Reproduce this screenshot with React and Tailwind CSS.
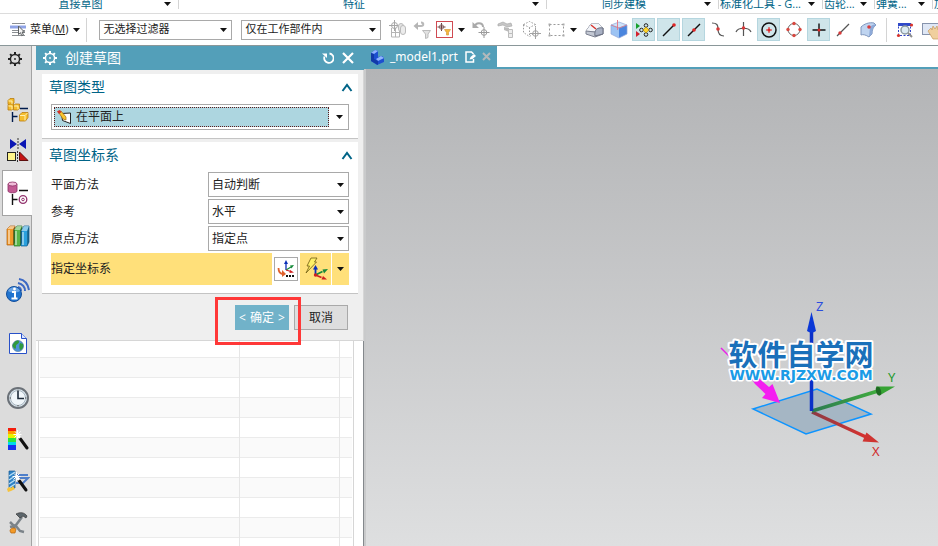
import React from 'react';
import clsx from 'clsx';

const Caret = ({ className }) => (
    <svg width="7" height="4" viewBox="0 0 7 4" className={clsx('shrink-0 pointer-events-none', className)} aria-hidden="true">
        <path d="M0 0h7L3.5 4z" fill="#111" />
    </svg>
);

const Icon = ({ w = 22, h = 22, className, children }) => (
    <svg width={w} height={h} viewBox={`0 0 ${w} ${h}`} className={clsx('shrink-0', className)} fill="none" aria-hidden="true">
        {children}
    </svg>
);

const GearIcon = ({ color, className }) => (
    <Icon w={14} h={14} className={className}>
        <circle cx="7" cy="7" r="4.6" stroke={color} strokeWidth="1.500" />
        <circle cx="7" cy="7" r=".9" fill={color} />
        <path d="M7 0v2.400M7 11.600V14M0 7h2.400M11.600 7H14M2.100 2.100l1.500 1.500M10.400 10.400l1.500 1.500M2.100 11.900l1.500-1.500M10.400 3.600l1.500-1.500" stroke={color} strokeWidth="2" />
    </Icon>
);

/* ---------- ribbon ---------- */

const ribbonGroups = [
    { label: '直接草图', className: 'w-[179px] shrink-0', center: true },
    { label: '特征', className: 'flex-1', center: true },
    { label: '同步建模', className: 'w-[172px] shrink-0', center: true },
    { label: '标准化工具 - G...', className: 'w-[104px] shrink-0' },
    { label: '齿轮...', className: 'w-[52px] shrink-0' },
    { label: '弹簧...', className: 'w-[58px] shrink-0' },
];

const Ribbon = () => (
    <div className="flex h-[14px] items-end overflow-hidden border-b border-[#dcdcdc] bg-white text-[11px] leading-[18px] text-[#006487]">
        {ribbonGroups.map((g) => (
            <div key={g.label} className={clsx('flex min-w-0 items-center', g.className)}>
                <span className={clsx('min-w-0 flex-1 whitespace-nowrap', g.center ? 'pl-1 text-center' : 'pl-px')}>{g.label}</span>
                <span className="flex w-[21px] shrink-0 justify-center">
                    <Caret />
                </span>
                <span className="h-[10px] w-px shrink-0 bg-[#d4d4d4]" />
            </div>
        ))}
        <span className="w-[5px] shrink-0 overflow-hidden whitespace-nowrap pl-px">加</span>
    </div>
);

/* ---------- toolbar ---------- */

const MenuIcon = () => (
    <Icon w={17} h={15}>
        <path d="M2 1.500h13M2 8.500h13M2 10.500h13M2 13.500h13" stroke="#8b8f93" strokeWidth="1" />
        <path d="M0 3.500h16v3H0z" fill="#8fa3e6" />
        <path d="M8.500 4v8.500l2-1.800 1.200 3 1.700-.8-1.300-2.900h2.400z" fill="#f4f4f4" stroke="#5d6062" />
    </Icon>
);

const PinnedViewsIcon = () => (
    <Icon>
        <path d="M4.500 9v9h8v-9M4.500 13.500h8M8.500 9v9" stroke="#b4b4b4" />
        <circle cx="7.500" cy="6.500" r="3" stroke="#a6a6a6" />
        <path d="M7.500 1v11M2 6.500h11" stroke="#a6a6a6" />
        <rect x="11.500" y="4.500" width="5" height="8" rx="2.500" stroke="#bbb" fill="#e4e4e4" />
        <rect x="13.500" y="6.500" width="5" height="9" rx="2.500" stroke="#bbb" fill="#ececec" />
    </Icon>
);

const ResetFilterIcon = () => (
    <Icon>
        <path d="M4 7h5c3 0 3-3.500 0-3.500" stroke="#b9b9b9" strokeWidth="2" />
        <path d="M6 3v8L1.500 7z" fill="#b5b5b5" />
        <path d="M10.500 11.500h8l-2.500 3.500v3.500l-2.500 1v-4.500z" fill="#e2e2e2" stroke="#bbb" />
    </Icon>
);

const SelectFilterIcon = () => (
    <Icon w={17} h={17}>
        <rect x="0.500" y="0.500" width="16" height="16" fill="#fff" stroke="#d04a52" />
        <path d="M5.500 2v8M1.500 6h8" stroke="#6a4040" />
        <circle cx="5.500" cy="6" r="2.200" stroke="#8a6a6a" />
        <path d="M8.500 8.500h6l-2 3v2.500h-2v-2.500z" fill="#f5b83c" stroke="#d69a3c" strokeWidth=".7" />
    </Icon>
);

const SnapUndoIcon = () => (
    <Icon>
        <path d="M4 8c0-5 8-5 8 0" stroke="#aaa" strokeWidth="2" />
        <path d="M1.500 3v6H8z" fill="#aaa" />
        <circle cx="13" cy="13.500" r="2.800" stroke="#9b9b9b" />
        <path d="M13 8v11M7.500 13.500h11" stroke="#9b9b9b" />
    </Icon>
);

const PartsIcon = () => (
    <Icon>
        <path d="M2 5l5-2 4 2 4-1 1 3-5 1-4-2-5 1z" fill="#c6c6c6" stroke="#aaa" strokeWidth=".7" />
        <path d="M8 8l5 1v4l-5-2z" fill="#bbb" />
        <path d="M12.500 10.500h4v4h-4zM12.500 14.500h4v4h-4z" fill="#ededed" stroke="#bcbcbc" />
    </Icon>
);

const DashedCubeIcon = () => (
    <Icon>
        <path d="M2.500 5.500l6-3 6 3v8l-6 4-6-4zM2.500 5.500l6 3 6-3M8.500 8.500v8" stroke="#9a9a9a" strokeDasharray="1.500 1.500" />
        <circle cx="14.500" cy="14.500" r="2.800" stroke="#a2a2a2" fill="#fff" />
        <path d="M14.500 9v11M9 14.500h11" stroke="#a2a2a2" />
    </Icon>
);

const MarqueeIcon = () => (
    <Icon>
        <rect x="3.500" y="5.500" width="14" height="11" stroke="#999" strokeDasharray="2 2" />
        <path d="M2.500 4.500h2v2h-2zM16.500 4.500h2v2h-2zM2.500 15.500h2v2h-2zM16.500 15.500h2v2h-2z" fill="#aaa" />
    </Icon>
);

const SolidFaceIcon = () => (
    <Icon>
        <path d="M3 12l5-7h8l4 4v6l-8 3-9-3z" fill="#c3c8d3" stroke="#7b8090" />
        <path d="M8 5h8l4 4c-4-1-6 0-7 3l-10 0z" fill="#f3f5f9" />
        <path d="M12 17c-1-6 2-9 8-8v6z" fill="#a9b1c4" stroke="#6a7082" />
        <path d="M3 12l9 1" stroke="#7b8090" />
        <path d="M8 6l5 4" stroke="#d7322b" strokeWidth="1.500" />
    </Icon>
);

const CubeIcon = () => (
    <Icon>
        <path d="M3 6l8-3 8 3-8 3z" fill="#cfe3fa" />
        <path d="M3 6l8 3v10l-8-4z" fill="#9cc3f3" />
        <path d="M19 6l-8 3v10l8-4z" fill="#4b86de" />
        <path d="M3 6l8-3 8 3v9l-8 4-8-4zM3 6l8 3 8-3" stroke="#8fa6da" strokeWidth=".7" />
        <path d="M9.500 1v10" stroke="#e37e8c" />
        <path d="M3 6l8 3 8-3" stroke="#e0707c" strokeWidth=".7" />
    </Icon>
);

const SnapAllIcon = () => (
    <Icon>
        <path d="M3 4v6l4-3z" fill="#17a12c" />
        <path d="M3 12v6l4-3z" fill="#d3202c" />
        <path d="M7 11h12M13 5v12" stroke="#333" />
        <circle cx="13" cy="6.500" r="1.800" fill="#cfe5ea" stroke="#222" />
        <circle cx="13" cy="15.500" r="1.800" fill="#cfe5ea" stroke="#222" />
        <circle cx="8.500" cy="11" r="1.800" fill="#cfe5ea" stroke="#222" />
        <circle cx="17.500" cy="11" r="1.800" fill="#cfe5ea" stroke="#222" />
        <path d="M13 8l3 3-3 3-3-3z" fill="#ffd42a" stroke="#b58a00" strokeWidth=".6" />
    </Icon>
);

const EndPointIcon = () => (
    <Icon>
        <path d="M5 17L16 6" stroke="#111" strokeWidth="1.400" />
        <circle cx="16" cy="6" r="1.800" fill="#e02525" />
    </Icon>
);

const MidPointIcon = () => (
    <Icon>
        <path d="M5 17L17 5" stroke="#111" strokeWidth="1.400" />
        <circle cx="11" cy="11" r="1.800" fill="#e02525" />
    </Icon>
);

const ControlPointIcon = () => (
    <Icon>
        <path d="M4 4c5 0 6 2 6 6s1 7 6 7" stroke="#555" strokeWidth="1.200" />
        <circle cx="10" cy="10" r="1.800" fill="#d83a3a" />
    </Icon>
);

const IntersectionIcon = () => (
    <Icon>
        <path d="M3 13c2-5 13-5 15 0M10.500 3v14" stroke="#555" strokeWidth="1.200" />
        <circle cx="10.500" cy="9" r="1.800" fill="#d83a3a" />
    </Icon>
);

const ArcCenterIcon = () => (
    <Icon>
        <circle cx="11" cy="11" r="7" stroke="#111" strokeWidth="1.500" />
        <path d="M11 8v6M8 11h6" stroke="#e02525" />
        <circle cx="11" cy="11" r="1.500" fill="#e02525" />
    </Icon>
);

const QuadrantIcon = () => (
    <Icon>
        <circle cx="11" cy="10.500" r="6" stroke="#666" />
        <circle cx="11" cy="4.500" r="1.700" fill="#d8473f" />
        <circle cx="11" cy="16.500" r="1.700" fill="#d8473f" />
        <circle cx="5" cy="10.500" r="1.700" fill="#d8473f" />
        <circle cx="17" cy="10.500" r="1.700" fill="#d8473f" />
    </Icon>
);

const ExistingPointIcon = () => (
    <Icon>
        <path d="M11 4.500v13M4.500 11h13" stroke="#111" strokeWidth="1.400" />
        <circle cx="11" cy="11" r="1.500" fill="#e02525" />
    </Icon>
);

const PointOnCurveIcon = () => (
    <Icon>
        <path d="M4 17L16 5" stroke="#555" strokeWidth="1.200" />
        <circle cx="7" cy="14" r="1.700" fill="#d83a3a" />
    </Icon>
);

const PointOnFaceIcon = () => (
    <Icon>
        <path d="M3 8c3-3 8-5 13-4l2 2c-3 2-4 5-4 9l-3 3c-3-2-6-3-8-2z" fill="#bfd4f0" stroke="#7f96bd" />
        <path d="M12 8c2-2 4-3 6-2-3 2-4 5-4 9l-3 3z" fill="#8eaad8" />
        <circle cx="11" cy="8" r="1.800" fill="#d83a3a" />
    </Icon>
);

const ZoomWindowIcon = () => (
    <Icon>
        <rect x="4.500" y="5.500" width="12" height="11" stroke="#3146c8" strokeDasharray="2 1.500" />
        <path d="M4 4h13v3H4z" fill="#2f49c9" />
        <circle cx="11" cy="11" r="4" fill="#dcebf3" stroke="#8d9aa1" strokeWidth="1.500" />
        <path d="M14 14l4 4" stroke="#8d8d8d" strokeWidth="2" />
        <circle cx="17.500" cy="6" r="1.600" fill="#d8332c" />
        <circle cx="4.500" cy="16.500" r="1.600" fill="#d8332c" />
    </Icon>
);

const PanIcon = () => (
    <Icon>
        <rect x="3.500" y="4.500" width="18" height="11" fill="#dfe7f5" stroke="#8794ad" />
        <path d="M9 12l3-3 1 2 1-4 2 3 2-3 1 4 3-1v7l-3 3h-5z" fill="#f0cf9e" stroke="#c79a5d" strokeWidth=".7" />
    </Icon>
);

const filterTools = [
    { name: '类型过滤器', Glyph: PinnedViewsIcon },
    { name: '重置过滤器', Glyph: ResetFilterIcon },
];

const selectionTools = [
    { name: '撤销捕捉', Glyph: SnapUndoIcon },
    { name: '选择部件', Glyph: PartsIcon },
    { name: '隐藏体', Glyph: DashedCubeIcon },
    { name: '矩形选择', Glyph: MarqueeIcon },
];

const snapTools = [
    { name: '高亮面', Glyph: SolidFaceIcon },
    { name: '高亮体', Glyph: CubeIcon },
    { name: '启用捕捉点', Glyph: SnapAllIcon, active: true },
    { name: '端点', Glyph: EndPointIcon, active: true },
    { name: '中点', Glyph: MidPointIcon, active: true },
    { name: '控制点', Glyph: ControlPointIcon },
    { name: '交点', Glyph: IntersectionIcon },
    { name: '圆弧中心', Glyph: ArcCenterIcon, active: true },
    { name: '象限点', Glyph: QuadrantIcon },
    { name: '现有点', Glyph: ExistingPointIcon, active: true },
    { name: '曲线上的点', Glyph: PointOnCurveIcon },
    { name: '面上的点', Glyph: PointOnFaceIcon },
];

const ToolButton = ({ name, Glyph, active }) => (
    <button
        type="button"
        aria-label={name}
        aria-pressed={!!active}
        className={clsx('flex h-[23px] w-[23px] shrink-0 items-center justify-center border', active ? 'border-[#b5d6df] bg-[#cfe5ea]' : 'border-transparent')}
    >
        <Glyph />
    </button>
);

const Select = ({ id, label, value, className }) => (
    <div className={clsx('relative', className)}>
        <select id={id} aria-label={label} defaultValue={value} className="block h-full w-full appearance-none border border-[#a9a9a9] bg-white pl-[3px] pr-4 text-[#222] outline-none">
            <option>{value}</option>
        </select>
        <Caret className="absolute right-[5px] top-1/2 -mt-0.5" />
    </div>
);

const Toolbar = () => (
    <div className="flex h-8 items-center gap-0.5 overflow-hidden border-b border-[#8a9799] bg-white pl-[10px] text-[11px]">
        <button type="button" className="flex shrink-0 items-center text-[#222]">
            <MenuIcon />
            <span className="ml-[3px] mr-[5px] whitespace-nowrap">
                菜单(<u>M</u>)
            </span>
            <Caret />
        </button>
        <span className="ml-1 h-6 w-px shrink-0 bg-[#d4d4d4]" />
        <Select label="类型过滤器" value="无选择过滤器" className="ml-[10px] h-5 w-[133px] shrink-0" />
        <Select label="选择范围" value="仅在工作部件内" className="ml-[7px] mr-[3px] h-5 w-[140px] shrink-0" />
        {filterTools.map((t) => (
            <ToolButton key={t.name} {...t} />
        ))}
        <button type="button" aria-label="选择过滤" className="shrink-0">
            <SelectFilterIcon />
        </button>
        <button type="button" aria-label="更多过滤" className="flex w-[13px] shrink-0 justify-center">
            <Caret />
        </button>
        {selectionTools.map((t) => (
            <ToolButton key={t.name} {...t} />
        ))}
        <button type="button" aria-label="更多选择" className="flex w-[10px] shrink-0">
            <Caret />
        </button>
        {snapTools.map((t) => (
            <ToolButton key={t.name} {...t} />
        ))}
        <span className="mx-1 h-6 w-px shrink-0 bg-[#d4d4d4]" />
        <ToolButton name="缩放" Glyph={ZoomWindowIcon} />
        <ToolButton name="平移" Glyph={PanIcon} />
    </div>
);

/* ---------- resource bar ---------- */

const AssemblyIcon = () => (
    <Icon w={24} h={26}>
        <g stroke="#b97c10" strokeWidth=".8" fill="#f5bd2d">
            <path d="M2 3.500l2-2h4v4.500l-2 1.500H2z" />
            <path d="M2 8.500l1.500-1.500h4v4.500l-1.500 1.500H2z" />
            <path d="M7.500 8.500l2-1.500h4v4.500l-1.500 1.500H7.500z" />
            <path d="M13.500 18l2.500-2.500h6v5L19.500 24h-6z" />
        </g>
        <path d="M2.500 4h3.500v3M2.500 9h3.500v3.500M8 9h4v3.500M14 18.500h5v5M19 18.500l2.500-2.500" stroke="#fff0ae" />
        <path d="M14 11.500h8M6.500 15v10M6.500 19.500h5" stroke="#001b4c" strokeWidth="1.400" />
    </Icon>
);

const ConstraintIcon = () => (
    <Icon w={24} h={26}>
        <path d="M4 2v10l7-5zM20 2v10l-7-5z" fill="#0b16b4" />
        <path d="M12 1v12" stroke="#333" strokeDasharray="2 1" />
        <rect x="1.500" y="15.500" width="8" height="8" fill="#fff48a" stroke="#222" />
        <path d="M13.500 15v8.500H22z" fill="#c41212" stroke="#5c0d0d" />
        <path d="M11.500 14v12" stroke="#333" strokeDasharray="2 1" />
    </Icon>
);

const PartNavIcon = () => (
    <Icon w={24} h={26}>
        <path d="M2 4v7c0 2.400 9 2.400 9 0V4z" fill="#c25a93" stroke="#8c2c63" strokeWidth=".8" />
        <ellipse cx="6.500" cy="4" rx="4.500" ry="2" fill="#efbcd8" stroke="#8c2c63" strokeWidth=".8" />
        <path d="M13 10.500h9M6.500 14v11M6.500 19.500h5" stroke="#111" strokeWidth="1.400" />
        <circle cx="17" cy="19.500" r="3.800" stroke="#93336e" strokeWidth="1.300" />
        <circle cx="17" cy="19.500" r="1.300" stroke="#93336e" />
    </Icon>
);

const BooksIcon = () => (
    <Icon w={24} h={24}>
        <path d="M1 5l3-3h5v17l-2 2H1z" fill="#f09a2a" stroke="#b35d0a" strokeWidth=".7" />
        <path d="M8 6l3-4h5v17l-2 3H8z" fill="#58b648" stroke="#27762a" strokeWidth=".7" />
        <path d="M15 7l3-5h5v16l-2 4h-6z" fill="#2aa0dd" stroke="#0b5f98" strokeWidth=".7" />
        <path d="M3 6v14M10 7v14M17 8v13" stroke="#fff" strokeOpacity=".6" strokeWidth="1.500" />
        <path d="M7 5l2-3v17l-2 2zM14 6l2-4v17l-2 3zM21 7l2-5v16l-2 4z" fill="#000" fillOpacity=".3" />
        <path d="M4 2h5l-2 3H1zM11 2h5l-2 4H8zM18 2h5l-2 5h-6z" fill="#fff" fillOpacity=".45" />
    </Icon>
);

const InfoIcon = () => (
    <Icon w={26} h={26}>
        <path d="M14 2c6 1 9 5 10 11M13 6c4 1 7 4 7 8M13 10c2 .5 3 2 3 4" stroke="#3c69c4" strokeWidth="2" />
        <circle cx="9" cy="17" r="7.500" fill="#2174cf" stroke="#124e9c" />
        <path d="M3 14c2-5 10-5 12 0-3 2-9 2-12 0z" fill="#9fc6f2" fillOpacity=".6" />
        <path d="M7 15h3v6M6.500 21.500h6" stroke="#fff" strokeWidth="2" />
        <circle cx="9.500" cy="12" r="1.400" fill="#fff" />
    </Icon>
);

const WebPageIcon = () => (
    <Icon w={20} h={24}>
        <path d="M1.500 1.500h12l5 5v15h-17z" fill="#fff" stroke="#2850c8" />
        <path d="M13.500 1.500v5h5" fill="#dce6ff" stroke="#2850c8" />
        <circle cx="10" cy="14" r="5.500" fill="#4b92d8" stroke="#557b9d" strokeWidth=".7" />
        <path d="M6 11c2-3 5-3 5-1s-3 2-3 4 0 4-2 2-2-3 0-5zM12 11l3 1c1 3-1 6-3 6-1-2-1-5 0-7z" fill="#2f9a3d" />
    </Icon>
);

const ClockIcon = () => (
    <Icon w={24} h={24}>
        <circle cx="12" cy="12" r="10" fill="#dbe7ef" stroke="#6b7178" strokeWidth="2" />
        <circle cx="12" cy="12" r="7.500" fill="#f0f6fa" stroke="#a9b6c0" />
        <path d="M12 5v7.500h6" stroke="#1d2b3a" strokeWidth="1.600" />
        <path d="M12 3.500v1.500M12 19v1.500M3.500 12H5M19 12h1.500" stroke="#555" />
    </Icon>
);

const Wand = () => (
    <>
        <path d="M12 10l8 11" stroke="#111" strokeWidth="3" strokeLinecap="round" />
        <path d="M11 8.500l2 2.500" stroke="#fff" strokeWidth="3" />
        <path d="M10.500 3v9M6.500 7.500h8M8 4.500l6 6M13.500 4.500l-6 6" stroke="#fff" />
    </>
);

const PaletteIcon = () => (
    <Icon w={22} h={24}>
        <path d="M1 1h8v4H1z" fill="#f41d0c" />
        <path d="M1 4h8v3H1z" fill="#ff9c00" />
        <path d="M1 7h8v4H1z" fill="#e7f300" />
        <path d="M1 11h8v4H1z" fill="#2ce53c" />
        <path d="M1 15h8v3H1z" fill="#00d9ec" />
        <path d="M1 18h8v5H1z" fill="#1631f0" />
        <Wand />
    </Icon>
);

const MachiningIcon = () => (
    <Icon w={24} h={24}>
        <path d="M10 6h12M10 9h12l-5 5h-7" stroke="#4f7fca" strokeWidth="2" />
        <path d="M3 2h6v17H3z" fill="#2f83c6" stroke="#175a94" strokeWidth=".7" />
        <path d="M3 7l6-4M3 11l6-4M3 15l6-4M3 19l6-4" stroke="#b5dcf5" strokeWidth="1.500" />
        <path d="M1 20l2-2 2 1 2-2 2 3-2 1-2 1-3 1z" fill="#f7c33b" />
        <Wand />
    </Icon>
);

const ToolsIcon = () => (
    <Icon w={22} h={24}>
        <path d="M15 6L6 18" stroke="#7b8389" strokeWidth="2.500" />
        <path d="M9 3c4-2 8-2 11 2l-1 2-3-2-3 2z" fill="#5d666c" stroke="#333" strokeWidth=".7" />
        <path d="M3 11l3 3 3 1 4 5 4 1M3 16l4-1" stroke="#7b8389" strokeWidth="2.500" />
        <path d="M3 20c0-3 4-4 6-2l-1 4H4z" fill="#f39a26" stroke="#b2630d" strokeWidth=".7" />
    </Icon>
);

const resourceTabs = [
    { name: '装配导航器', Glyph: AssemblyIcon, className: 'mt-[18px] h-10' },
    { name: '约束导航器', Glyph: ConstraintIcon, className: 'h-10' },
    { name: '部件导航器', Glyph: PartNavIcon, className: 'h-[46px]', active: true },
    { name: '重用库', Glyph: BooksIcon, className: 'h-10' },
    { name: 'HD3D 工具', Glyph: InfoIcon, className: 'mt-[14px] h-10' },
    { name: 'Web 浏览器', Glyph: WebPageIcon, className: 'mt-[14px] h-10' },
    { name: '历史记录', Glyph: ClockIcon, className: 'mt-[14px] h-10' },
    { name: '系统材料', Glyph: PaletteIcon, className: 'h-[42px]' },
    { name: '加工向导', Glyph: MachiningIcon, className: 'h-[42px]' },
    { name: '角色', Glyph: ToolsIcon, className: 'h-[42px]' },
];

const ResourceBar = () => (
    <nav className="flex w-8 shrink-0 flex-col bg-[#dcdcdc] shadow-[inset_-1px_0_0_#a3a3a3]">
        <button type="button" aria-label="资源条选项" className="flex h-[26px] shrink-0 items-center justify-center pr-0.5">
            <GearIcon color="#222" />
        </button>
        {resourceTabs.map(({ name, Glyph, className, active }) => (
            <button
                key={name}
                type="button"
                aria-label={name}
                className={clsx('flex shrink-0 items-center justify-center', active ? 'ml-0.5 border-y border-l border-[#a3a3a3] bg-white' : 'pl-[3px]', className)}
            >
                <Glyph />
            </button>
        ))}
    </nav>
);

/* ---------- dialog ---------- */

const Section = ({ title, children }) => (
    <section className="border-b border-[#c4c4c4] bg-white px-[9px] pb-2">
        <div className="-ml-0.5 flex h-[26px] items-center justify-between text-sm text-[#006487]">
            <h2>{title}</h2>
            <button type="button" aria-label={`折叠${title}`}>
                <Icon w={12} h={9} className="-mr-1">
                    <path d="M1.500 8L6 2l4.500 6" stroke="#006487" strokeWidth="2" />
                </Icon>
            </button>
        </div>
        {children}
    </section>
);

const fields = [
    { id: 'plane-method', label: '平面方法', value: '自动判断' },
    { id: 'reference', label: '参考', value: '水平' },
    { id: 'origin-method', label: '原点方法', value: '指定点' },
];

const SketchPlaneIcon = () => (
    <Icon w={15} h={15} className="pointer-events-none absolute left-[5px] top-[5px]">
        <path d="M4.500 3.500l9-.5v10.500l-8-3z" fill="#fff" stroke="#222" />
        <path d="M1 1.500l3-.5 5 6 0 3-3-1z" fill="#f7c62e" stroke="#a46d0b" strokeWidth=".7" />
        <path d="M0 1.500l2.500-1.500 2 2L2 4z" fill="#d3302a" />
    </Icon>
);

const CsysDialogIcon = () => (
    <Icon w={20} h={20}>
        <path d="M10 11V4" stroke="#0b2fb8" strokeWidth="1.300" />
        <path d="M10 1l-2 4h4z" fill="#0b2fb8" />
        <path d="M10 11l5-3" stroke="#168a3a" strokeWidth="1.300" />
        <path d="M18 6l-4 .5 1.500 3z" fill="#168a3a" />
        <path d="M10 11l5 1.500" stroke="#d02020" strokeWidth="1.300" />
        <path d="M18 13.500l-4-2.500-.5 3z" fill="#d02020" />
        <path d="M2.500 9c0 4 1 6 5 6" stroke="#e0602c" strokeWidth="1.800" />
        <path d="M6 11l4 4-4 3z" fill="#e0602c" />
        <path d="M10 16h2v2h-2zM13 16h2v2h-2zM16 16h2v2h-2z" fill="#111" />
    </Icon>
);

const InferredCsysIcon = () => (
    <Icon w={26} h={26}>
        <path d="M8 2h6l-2.500 4h2L3 17l3.500-7H4z" fill="#fff066" stroke="#6d5b12" strokeWidth=".8" />
        <path d="M12.500 19v-7" stroke="#0b2fb8" strokeWidth="1.800" />
        <path d="M12.500 9l-2.500 4.500h5z" fill="#0b2fb8" />
        <path d="M12.500 19l7-3.500" stroke="#168a3a" strokeWidth="1.800" />
        <path d="M25 13l-5.500.5 1.500 4z" fill="#168a3a" />
        <path d="M12.500 19l6 2.500" stroke="#d02020" strokeWidth="1.800" />
        <path d="M24 23.500l-4-3.500-1.500 3.500z" fill="#d02020" />
        <circle cx="12.500" cy="19" r="1.700" fill="#d02020" />
    </Icon>
);

const CreateSketchDialog = () => (
    <div role="dialog" aria-label="创建草图" className="border-b border-r border-[#d6d6d6] bg-[#efefef]">
        <header className="-mr-px flex h-6 items-center bg-[#539fb9] pl-[7px] pr-[10px] text-white">
            <GearIcon color="#fff" />
            <h1 className="ml-2 flex-1 text-sm leading-6">创建草图</h1>
            <button type="button" aria-label="重置" className="mr-2">
                <Icon w={12} h={12}>
                    <path d="M2.500 4.500a4.700 4.700 0 1 0 5-3" stroke="#fff" strokeWidth="1.800" />
                    <path d="M0 1.500h5v4.500z" fill="#fff" />
                </Icon>
            </button>
            <button type="button" aria-label="关闭">
                <Icon w={12} h={12}>
                    <path d="M1 1l10 10M11 1L1 11" stroke="#fff" strokeWidth="2.200" />
                </Icon>
            </button>
        </header>

        <div className="flex flex-col gap-[3px] pt-1 pr-[5px] pl-[6px] text-xs">
            <Section title="草图类型">
                <div className="relative mt-1 border border-[#a9a9a9] bg-white p-0.5 pr-[19px]">
                    <select aria-label="草图类型" defaultValue="在平面上" className="block h-5 w-full appearance-none border border-dotted border-[#5a1d1d] bg-[#add6e0] pl-[21px] text-[#222] outline-none">
                        <option>在平面上</option>
                    </select>
                    <SketchPlaneIcon />
                    <Caret className="absolute right-[5px] top-1/2 -mt-0.5" />
                </div>
            </Section>

            <Section title="草图坐标系">
                <div className="mt-1 flex flex-col gap-0.5">
                    {fields.map((f) => (
                        <div key={f.id} className="flex h-[25px] items-center">
                            <label htmlFor={f.id} className="flex-1 text-[#222]">
                                {f.label}
                            </label>
                            <Select id={f.id} value={f.value} className="h-full w-[141px]" />
                        </div>
                    ))}
                    <div className="flex h-8 items-center">
                        <span className="flex h-full flex-1 items-center bg-[#ffe07a] text-[#222]">指定坐标系</span>
                        <button type="button" aria-label="坐标系对话框" className="mx-0.5 flex h-6 w-6 items-center justify-center border border-[#a9a9a9] bg-white">
                            <CsysDialogIcon />
                        </button>
                        <button type="button" aria-label="自动判断坐标系" className="flex h-full w-8 items-center justify-center border-r border-white bg-[#ffe07a]">
                            <InferredCsysIcon />
                        </button>
                        <button type="button" aria-label="更多坐标系选项" className="flex h-full w-[17px] items-center justify-center bg-[#ffe07a]">
                            <Caret />
                        </button>
                    </div>
                </div>
            </Section>
        </div>

        <footer className="flex justify-end gap-[5px] pt-[11px] pr-[15px] pb-[10px] text-xs">
            <div className="relative">
                <button type="button" className="flex h-[25px] w-[54px] items-center justify-center gap-1 whitespace-nowrap bg-[#71b2c9] text-white">
                    <span>&lt;</span>
                    <span>确定</span>
                    <span>&gt;</span>
                </button>
                <span className="pointer-events-none absolute -top-2 -right-3 -bottom-[15px] -left-5 z-10 border-3 border-[#ff3838]" />
            </div>
            <button type="button" className="h-[25px] w-[54px] border border-[#a9a9a9] bg-[#dedede] text-[#222]">
                取消
            </button>
        </footer>
    </div>
);

const NavigatorTable = () => (
    <div className="min-h-0 flex-1 overflow-hidden border-r border-[#84888c] bg-white pl-0.5 pr-[9px]">
        <div className="h-full border-x border-[#d6d6d6] px-px">
            <table aria-label="部件导航器" className="w-full table-fixed border-collapse">
                <colgroup>
                    <col />
                    <col className="w-[100px]" />
                    <col className="w-[13px]" />
                </colgroup>
                <tbody>
                    {Array.from({ length: 11 }, (_, i) => (
                        <tr key={i} className={clsx('border-b border-[#ebebeb]', i % 2 && 'bg-[#fafafa]', i === 0 ? 'h-4' : 'h-5')}>
                            <td className="border-r border-[#e6e6e6]" />
                            <td className="border-r border-[#e6e6e6]" />
                            <td />
                        </tr>
                    ))}
                </tbody>
            </table>
        </div>
    </div>
);

/* ---------- graphics window ---------- */

const FileTab = () => (
    <div className="flex h-[23px] shrink-0 border-b-2 border-[#539fb9] bg-white">
        <div className="flex items-center bg-[#539fb9] pl-[6px] pr-[6px] text-white">
            <Icon w={15} h={16}>
                <path d="M1 4l4-3 3 1v6l4-1 2 2v4l-7 3-6-4z" fill="#1d4fd0" />
                <path d="M1 4l4-3 3 1-4 3zM6 10l5-3 3 2-6 3z" fill="#8fb4ff" />
                <path d="M1 4l3 1v5l4 2v4l-7-4z" fill="#123aa8" />
            </Icon>
            <span className="ml-[5px] font-['Noto_Sans'] text-xs">_model1.prt</span>
            <Icon w={12} h={12} className="ml-[7px]">
                <path d="M8.500 8v3H1V1h5.500l2 2" stroke="#fff" strokeWidth="1.500" />
                <path d="M4.500 8.500l1-2.500 3.500-3 2 2-3.500 3z" fill="#fff" />
            </Icon>
            <button type="button" aria-label="关闭 _model1.prt" className="ml-[5px]">
                <Icon w={9} h={9}>
                    <path d="M1 1l7 7M8 1L1 8" stroke="#b3b9bb" strokeWidth="2" />
                </Icon>
            </button>
        </div>
    </div>
);

const Scene = () => (
    <svg className="absolute left-[334px] top-[221px]" width="238" height="180" viewBox="700 290 238 180" fill="none" role="img" aria-label="基准坐标系">
        <defs>
            <linearGradient id="shaftX" x1="812" y1="412" x2="872" y2="440" gradientUnits="userSpaceOnUse">
                <stop stopColor="#8c3a44" />
                <stop offset="1" stopColor="#e0302c" />
            </linearGradient>
            <linearGradient id="shaftY" x1="812" y1="412" x2="890" y2="388" gradientUnits="userSpaceOnUse">
                <stop stopColor="#2b7a52" />
                <stop offset="1" stopColor="#43b53a" />
            </linearGradient>
        </defs>
        <path d="M753 409l64-20 54 25-65 20z" fill="#a5b6c4" stroke="#0d94ff" strokeWidth="1.500" />
        <path d="M812 412l54 25" stroke="url(#shaftX)" strokeWidth="3.500" />
        <path d="M879 442.500l-12.500-10-4 9z" fill="#cf3431" />
        <path d="M812 411l66-20" stroke="url(#shaftY)" strokeWidth="3.500" />
        <path d="M895 386.500l-19 0 3.500 9z" fill="#36a334" />
        <ellipse cx="878.500" cy="391" rx="2.500" ry="4.500" fill="#1f6b23" transform="rotate(-15 879 391)" />
        <path d="M811.500 411v-80" stroke="#0a2fc9" strokeWidth="3.500" />
        <path d="M811.500 312l-4.500 19q4.500 3 9 0z" fill="#0b38d6" />
        <path d="M721 348l8 8" stroke="#e81fe8" strokeWidth="1.500" />
        <path d="M743 367l14 9.500 12 10.500 3.500-3 7.500 19-18-5 3.500-4-10.500-10z" fill="#f41df0" />
        <g fontFamily="'Noto Sans', sans-serif" fontSize="13">
            <text x="816" y="311" fill="#2b4ce0">Z</text>
            <text x="888" y="382" fill="#259a2d">Y</text>
            <text x="872" y="456" fill="#d12c2c">X</text>
        </g>
        <g paintOrder="stroke" stroke="#fff" strokeLinejoin="round" fontWeight="bold" textAnchor="middle">
            <text x="801" y="366" fontFamily="'Noto Sans CJK SC', sans-serif" fontSize="29" strokeWidth="4" fill="#1a70ba">软件自学网</text>
            <text x="801" y="380" fontFamily="'DejaVu Sans', sans-serif" fontSize="14" strokeWidth="3" fill="#1a9be6">WWW.RJZXW.COM</text>
        </g>
    </svg>
);

const App = () => (
    <div className="flex h-screen flex-col overflow-hidden bg-[#efefef] font-['Open_Sans','Noto_Sans_CJK_SC',sans-serif]">
        <Ribbon />
        <Toolbar />
        <div className="flex min-h-0 flex-1">
            <ResourceBar />
            <div className="flex w-[332px] shrink-0 flex-col pl-1">
                <CreateSketchDialog />
                <NavigatorTable />
            </div>
            <main className="flex min-w-0 flex-1 flex-col">
                <FileTab />
                <div className="relative flex-1 overflow-hidden border-l-2 border-[#c9cacb] bg-linear-to-b from-[#b3b4b6] to-[#dedfe0]">
                    <Scene />
                </div>
            </main>
        </div>
    </div>
);

export default App;
